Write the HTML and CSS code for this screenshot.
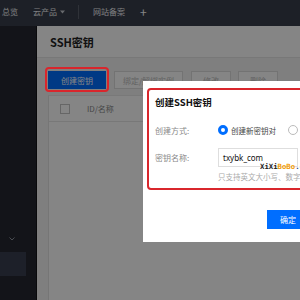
FILE: index.html
```html
<!DOCTYPE html>
<html lang="zh-CN">
<head>
<meta charset="utf-8">
<title>SSH密钥</title>
<link rel="stylesheet" href="styles.css">
</head>
<body>
<div class="app">
  <header class="topnav">
    <span class="nav-item nav-first">总览</span>
    <span class="nav-item nav-products">云产品
      <svg class="caret" width="5" height="4" viewBox="0 0 5 4"><path d="M0 0.5 L2.5 3.5 L5 0.5 Z" fill="currentColor"/></svg>
    </span>
    <span class="nav-divider"></span>
    <span class="nav-item nav-beian">网站备案</span>
    <span class="nav-plus">+</span>
  </header>
  <div class="body">
    <aside class="sidebar">
      <div class="side-toggle">
        <svg width="6" height="4" viewBox="0 0 6 4"><path d="M0.5 0.5 L3 3 L5.5 0.5" fill="none" stroke="currentColor" stroke-width="1"/></svg>
      </div>
      <div class="side-item"></div>
    </aside>
    <main class="main">
      <div class="page-head"><h1 class="page-title">SSH密钥</h1></div>
      <div class="content">
        <div class="toolbar">
          <button class="btn btn-primary">创建密钥</button>
          <button class="btn btn-default btn-wide">绑定/解绑实例</button>
          <button class="btn btn-default btn-small">修改</button>
          <button class="btn btn-default btn-small btn-last">删除</button>
        </div>
        <div class="table">
          <div class="thead">
            <span class="checkbox"></span>
            <span class="th">ID/名称</span>
          </div>
        </div>
      </div>
    </main>
  </div>
</div>

<div class="mask"></div>

<div class="modal">
  <div class="highlight">
    <div class="modal-title">创建SSH密钥</div>
    <div class="form">
      <div class="form-row">
        <span class="form-label">创建方式:</span>
        <div class="radios">
          <span class="radio radio-on"></span><span class="radio-text">创建新密钥对</span>
          <span class="radio radio-off"></span><span class="radio-text">使用已有公钥</span>
        </div>
      </div>
      <div class="form-row form-row-input">
        <span class="form-label">密钥名称:</span>
        <div class="input">txybk_com</div>
      </div>
      <div class="form-help">只支持英文大小写、数字和下划线，不超过25个字符</div>
    </div>
  </div>
  <div class="modal-footer">
    <button class="btn-ok">确定</button>
  </div>
</div>

<div class="watermark">XiXi<span class="wm-orange">BoBo</span><span class="wm-blue">.com</span></div>
</body>
</html>
```

FILE: styles.css
```css
* { box-sizing: border-box; }

html, body {
  margin: 0;
  padding: 0;
  width: 300px;
  height: 300px;
  overflow: hidden;
}

body {
  font-family: "Noto Sans CJK SC", "Noto Sans", sans-serif;
  background: #f3f3f3;
  position: relative;
}

.app {
  display: grid;
  grid-template-rows: 26px 1fr;
  height: 300px;
}

/* top navigation */
.topnav {
  display: flex;
  align-items: center;
  padding-bottom: 3px;
  background: #383e4b;
  color: #f0f2f5;
  font-size: 8px;
  line-height: 10px;
  white-space: nowrap;
}
.nav-first { margin-left: 2px; }
.nav-products { margin-left: 15px; display: flex; align-items: center; }
.caret { margin-left: 3px; color: #c8ccd3; }
.nav-divider {
  margin-left: 13px;
  width: 1px;
  height: 14px;
  background: #5a606c;
}
.nav-beian { margin-left: 14px; }
.nav-plus {
  margin-left: 15px;
  font-size: 12px;
  line-height: 12px;
  color: #ffffff;
}

/* body */
.body {
  display: flex;
  min-height: 0;
}

.sidebar {
  width: 37px;
  flex: none;
  background: #252830;
  border-right: 1px solid #141518;
  display: flex;
  flex-direction: column;
  padding-top: 211px;
}
.side-toggle {
  padding-left: 9px;
  height: 15px;
  color: #9096a0;
  display: flex;
  align-items: flex-start;
}
.side-item {
  width: 26px;
  height: 24px;
  background: #393f50;
}

.main {
  flex: 1;
  display: flex;
  flex-direction: column;
  min-width: 0;
}

.page-head {
  height: 32px;
  background: #ffffff;
  border-bottom: 1px solid #e6e6e6;
  padding-left: 13px;
  display: flex;
  align-items: center;
}
.page-title {
  margin: 0;
  font-size: 11px;
  font-weight: 700;
  color: #222;
}

.content {
  flex: 1;
  padding: 13px 0 0 11px;
  display: flex;
  flex-direction: column;
}

.toolbar {
  display: flex;
  height: 18px;
  white-space: nowrap;
}
.btn {
  height: 18px;
  padding: 0;
  font-family: inherit;
  font-size: 8px;
  border-radius: 0;
  flex: none;
}
.btn-primary {
  position: relative;
  width: 58px;
  background: #006eff;
  border: none;
  color: #ffffff;
}
.btn-primary::after {
  content: "";
  position: absolute;
  left: -3px;
  top: -4px;
  right: -3px;
  bottom: -3px;
  border: 2px solid #d9262c;
  border-radius: 4px;
  z-index: 20;
}
.btn-default {
  background: #ffffff;
  border: 1px solid #dcdcdc;
  color: #bdbdbd;
}
.btn-wide { width: 69px; margin-left: 8px; }
.btn-small { width: 40px; margin-left: 8px; }
.btn-last { margin-left: 7px; }

.table {
  flex: 1;
  margin-top: 6px;
  background: #ffffff;
  border-left: 1px solid #e2e2e2;
  border-top: 1px solid #e8e8e8;
}
.thead {
  height: 26px;
  border-bottom: 1px solid #e6e6e6;
  display: flex;
  align-items: center;
  padding-left: 11px;
}
.checkbox {
  width: 10px;
  height: 10px;
  border: 1px solid #c4c4c4;
  background: #fff;
}
.th {
  margin-left: 17px;
  font-size: 8px;
  color: #888;
}

/* mask */
.mask {
  position: fixed;
  inset: 0;
  background: rgba(0, 0, 0, 0.48);
  z-index: 10;
}

/* modal */
.modal {
  position: fixed;
  left: 143px;
  top: 81px;
  width: 180px;
  background: #ffffff;
  padding: 7px 4px 13px 4px;
  z-index: 30;
}
.highlight {
  border: 2px solid #d9262c;
  border-radius: 4px;
  padding: 5px 6px 5px 6px;
}
.modal-title {
  font-size: 9.5px;
  line-height: 14px;
  font-weight: 700;
  color: #111;
}
.form {
  margin-top: 11px;
}
.form-row {
  display: grid;
  grid-template-columns: 63px 1fr;
  align-items: center;
  height: 20px;
}
.form-row-input {
  margin-top: 8px;
  height: 19px;
}
.form-label {
  font-size: 8px;
  color: #888;
  white-space: nowrap;
}
.radios {
  display: flex;
  align-items: center;
  white-space: nowrap;
}
.radio {
  width: 10px;
  height: 10px;
  border-radius: 50%;
  background: #fff;
  flex: none;
}
.radio-on { border: 3px solid #006eff; }
.radio-off { border: 1px solid #bbbbbb; margin-left: 12px; }
.radio-text {
  margin-left: 3px;
  font-size: 7.5px;
  color: #444;
}
.input {
  width: 80px;
  height: 19px;
  border: 1px solid #dedede;
  padding-left: 4px;
  font-size: 8px;
  line-height: 17px;
  color: #111;
  font-family: "Noto Sans", "Noto Sans CJK SC", sans-serif;
}
.form-help {
  margin-top: 4px;
  margin-left: 63px;
  font-size: 7.5px;
  line-height: 12px;
  color: #aaa;
  white-space: nowrap;
}
.modal-footer {
  margin-top: 20px;
  display: flex;
  justify-content: flex-end;
  padding-right: 10px;
}
.btn-ok {
  width: 42px;
  height: 19px;
  border: none;
  border-radius: 0;
  padding: 0;
  background: #006eff;
  color: #fff;
  font-family: inherit;
  font-size: 8px;
}

/* watermark overlay */
.watermark {
  position: fixed;
  left: 260px;
  top: 162px;
  z-index: 40;
  font-family: "DejaVu Sans Mono", "Liberation Mono", monospace;
  font-weight: 700;
  font-size: 7.3px;
  line-height: 9px;
  color: #1a1a1a;
  white-space: nowrap;
}
.wm-orange { color: #f29b00; }
.wm-blue { color: #1d4f91; }
```
